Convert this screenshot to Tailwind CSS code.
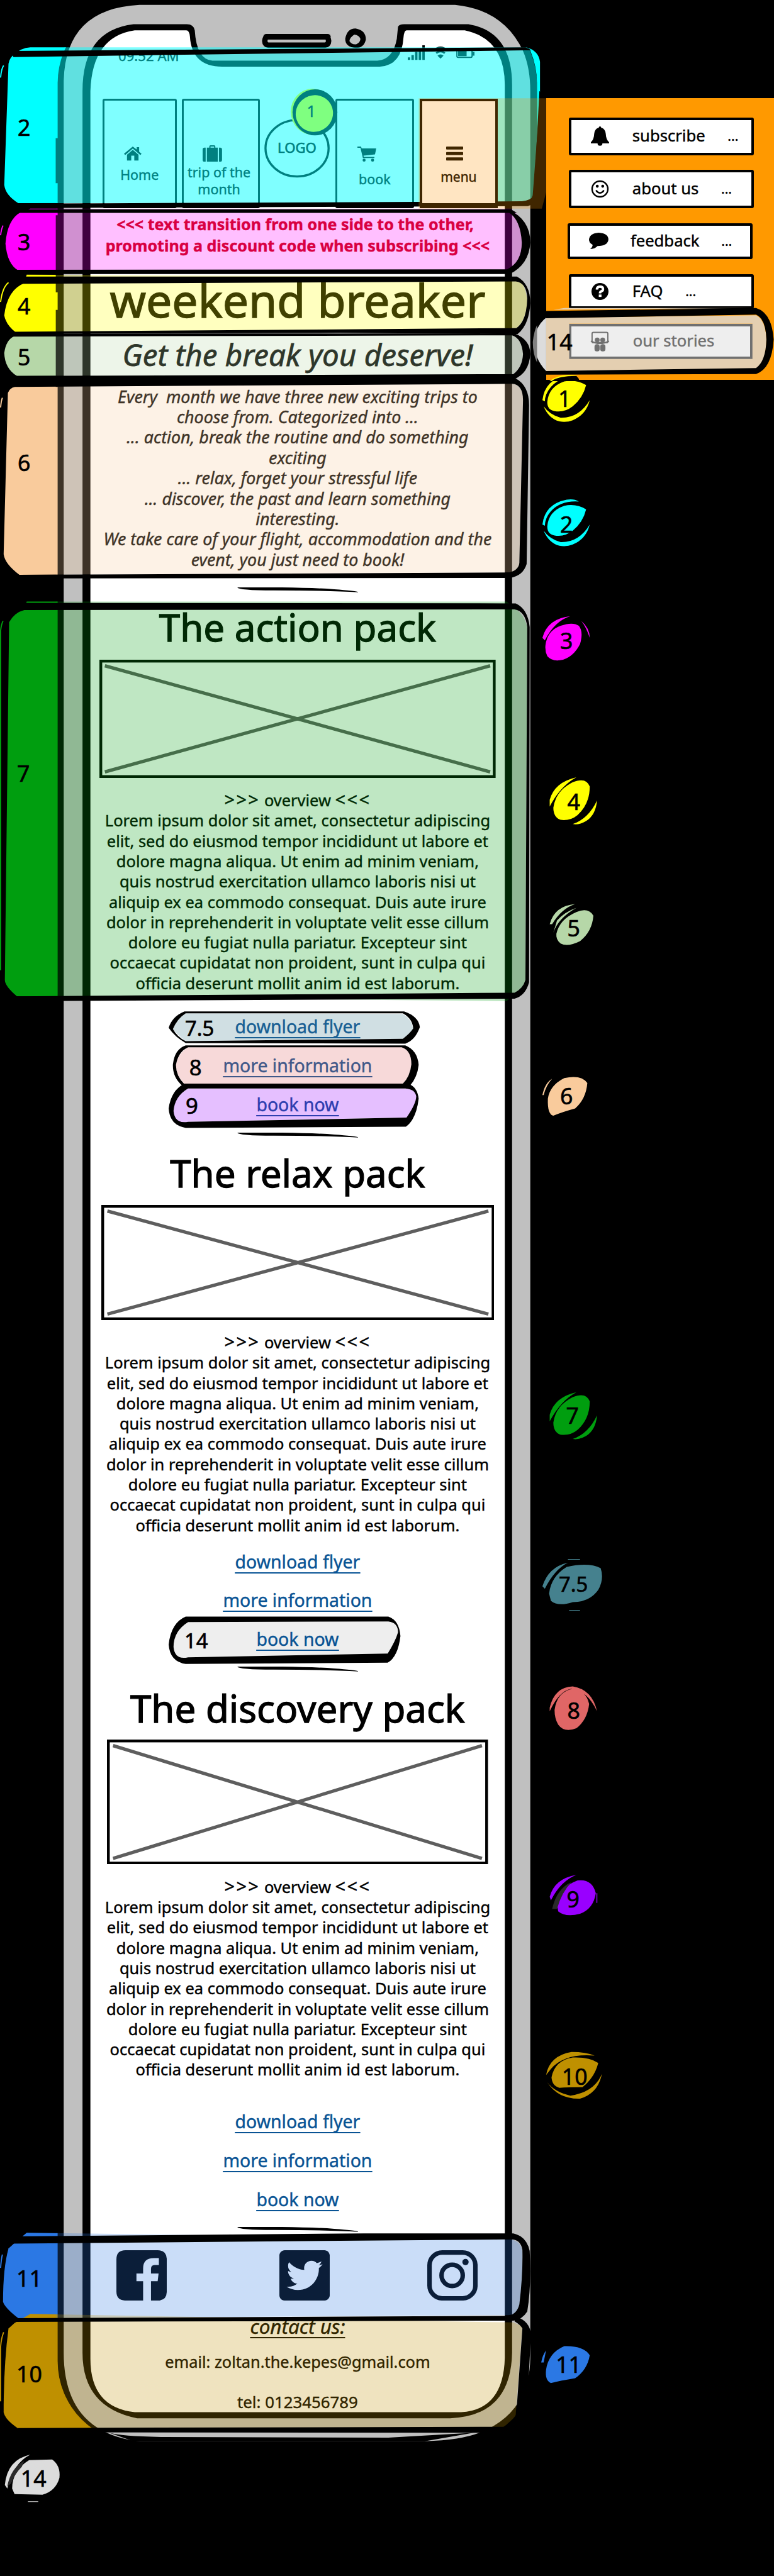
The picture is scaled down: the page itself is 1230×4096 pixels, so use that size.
<!DOCTYPE html>
<html lang="en">
<head>
<meta charset="utf-8">
<title>weekend breaker – annotated wireframe</title>
<script src="https://cdn.jsdelivr.net/npm/@tailwindcss/browser@4"></script>
</head>
<body class="bg-black overflow-hidden">
<div class="relative w-[1276px] h-[4248px] overflow-hidden bg-black text-black [zoom:0.9642] font-['Noto_Sans',sans-serif] [-webkit-text-stroke:0.45px]">

  <!-- Annotation colours behind the phone, then the phone body -->
  <svg class="absolute inset-0" width="1276" height="4248" viewBox="0 0 1276 4248">
    <defs>
      <path id="b2" d="M50 78H868Q888 84 890 102V162L878 322Q874 334 866 334L30 335Q9 322 7 305L14 105Q16 94 24 90Q34 79 50 78Z"/>
      <path id="b3" d="M50 344H842Q870 366 873 400Q868 434 845 446L30 446Q12 436 9 402Q12 362 34 350Z"/>
      <path id="b4" d="M44 453L850 457Q868 468 869 500Q866 530 850 542L26 548Q10 536 7 520Q12 478 40 467Z"/>
      <path id="b5" d="M24 554L846 552Q861 562 862 584Q860 606 844 618L28 620Q8 608 7 582Q10 560 24 554Z"/>
      <path id="b6" d="M24 638L40 625L846 632Q861 640 862 654L856 930Q852 943 840 944L32 948Q8 930 6 914L13 648Q16 640 24 638Z"/>
      <path id="b7" d="M40 1006L44 992H835L850 1004Q866 1016 869 1036L866 1620Q860 1634 850 1637L835 1651L28 1643Q8 1626 8 1616L15 1026Q24 1010 40 1006Z"/>
      <path id="b11" d="M24 3699L44 3682L842 3693Q860 3696 861 3716Q862 3770 855 3808Q850 3817 838 3818L30 3823Q8 3806 5 3796Q5 3740 14 3708Z"/>
      <path id="b10" d="M24 3831L50 3816L846 3830L861 3836L850 3982Q846 3998 830 4003L30 4005Q8 3990 6 3978Q6 3900 14 3840Z"/>
      <path id="leaf" d="M8 45Q10 20 36 11Q56 7 72 17Q67 38 50 52Q36 63 20 60Q8 58 8 45ZM0 42Q4 8 40 1Q52 -1 60 4Q30 2 14 20Q4 32 4 44ZM2 52Q12 66 30 71Q60 72 78 42Q72 66 50 75Q40 79 28 77Q10 72 2 52Z"/>
      <path id="drop" d="M6 50Q10 22 38 8Q60 -1 66 15Q66 44 46 62Q34 72 18 70Q6 66 6 50ZM0 37Q8 8 44 0Q18 14 0 48ZM38 77Q64 68 78 38Q76 62 60 72Q48 79 38 77Z"/>
      <path id="oval" d="M5 48Q8 24 30 16Q50 9 60 16Q68 26 62 46Q52 66 34 72Q16 76 8 66Q4 58 5 48ZM0 36Q8 4 46 0Q20 8 4 40ZM64 8Q78 20 78 36Q72 18 64 8Z"/>
      <clipPath id="phone"><rect x="92" y="1" width="793" height="4029" rx="138"/></clipPath>
      <clipPath id="leftHalf"><rect width="480" height="4248"/></clipPath>
    </defs>
    <use href="#b2" fill="#00ffff"/><use href="#b3" fill="#ff00ff"/><use href="#b4" fill="#ffff00"/>
    <use href="#b5" fill="#b6d7a8"/><use href="#b6" fill="#f9cb9c"/><use href="#b7" fill="#009e0f"/>
    <use href="#b11" fill="#2b78e4"/><use href="#b10" fill="#bf9000" clip-path="url(#leftHalf)"/>
    <g fill="none" stroke-width="2">
      <path d="M1 128Q2 114 6 108" stroke="#00ffff"/><path d="M1 388Q2 378 5 372" stroke="#ff00ff"/>
      <path d="M1 498Q4 474 14 466" stroke="#ffff00"/><path d="M1 672Q2 660 4 656" stroke="#f9cb9c"/>
      <path d="M1 1600V1040Q2 1030 5 1024" stroke="#009e0f"/><path d="M1 3740Q2 3725 4 3718" stroke="#2b78e4"/>
      <path d="M1 3960V3870Q2 3856 6 3846" stroke="#bf9000"/>
    </g>

    <!-- phone body -->
    <path d="M92 228H97V302H92ZM92 355H97V482H92ZM92 511H97V638H92Z"/>
    <rect x="95" y="1" width="790" height="4029" rx="136"/>
    <path d="M230 8H750Q830 16 862 84Q874 112 874 150V3890Q872 3980 790 4012Q760 4024 700 4026H230Q105 4012 105 3880V133Q108 14 230 8Z" fill="#c0c0c0"/>
    <path d="M180 4012Q200 4018 270 4019L640 4020L780 4012L820 4005L700 4026L220 4026Z"/>
    <path d="M220 40H308Q319 40 321 50Q324 98 350 100H622Q648 98 654 64L656 44Q658 40 666 40H772Q844 52 844 140V3880Q842 3984 742 3988H226Q136 3970 136 3880V150Q136 50 220 40Z"/>
    <path d="M222 50H307Q312 50 313 60Q316 110 366 110H626Q662 108 665 62Q666 50 670 50H766Q832 64 832 140V3888Q830 3974 760 3978H222Q149 3970 149 3890V150Q152 60 222 50Z" fill="#fff"/>
    <rect x="436.500" y="60.500" width="105" height="14" rx="6" fill="#c0c0c0" stroke="#000" stroke-width="9"/>
    <rect x="434" y="56" width="111" height="9" rx="5"/>
    <path d="M586 47Q603 50 603 65Q600 79 587 79Q569 78 569 64Q572 47 586 47ZM584 57Q576 62 576 68Q580 74 587 73Q594 70 594 64Q592 58 584 57Z" fill-rule="evenodd"/>
  </svg>

  <!-- Phone screen -->
  <main class="absolute left-[149px] top-[77px] w-[683px] flex flex-col items-center text-center whitespace-nowrap">
    <div class="w-full h-[30px] pl-[46px] pr-[50px] flex items-start justify-between text-[23px] leading-[30px]">
      <span>09:52 AM</span>
      <svg class="-mt-[2px]" width="110" height="26" viewBox="0 0 110 26"><path d="M0 20h4v4H0zM6 16h4v8H6zM12 11h4v13h-4zM18 6h4v18h-4zM24 0h4v24h-4z"/><g fill="none" stroke="#000" stroke-width="3"><path d="M43 8Q54-1 65 8M47 13Q54 7 61 13"/></g><path d="M49 17Q54 13 59 17L54 22Z"/><rect x="81" y="8" width="25" height="12" rx="2" fill="none" stroke="#000" stroke-width="2"/><path d="M83 9h14v9H83zM107 11h3v6h-3z"/></svg>
    </div>

    <nav class="mt-[56px] w-full h-[180px] pl-[20px] flex text-[22.3px] leading-[28px]">
      <div class="w-[122px] border-[3.5px] border-black rounded-[3px] flex flex-col items-center">
        <svg class="mt-[76px] mr-[22px]" width="29" height="23" viewBox="0 0 29 23"><path d="M14.500 0L0 12l2 2L14.500 3.500 27 14l2-2-4-3.500V1h-4v4zM5 13.500L14.500 5.500 24 13.500V23H17V15h-5v8H5z"/></svg>
        <span class="mt-[9px]">Home</span>
      </div>
      <div class="ml-[9px] w-[128px] border-[3.5px] border-black rounded-[3px] flex flex-col items-center">
        <svg class="mt-[74px] mr-[28px]" width="32" height="27" viewBox="0 0 32 27"><path d="M11 4V2Q11 0 13 0h6Q21 0 21 2v2h4v23H7V4zM13 4h6V2h-6zM5 4v23H3Q0 27 0 24V7Q0 4 3 4zM27 4v23h2Q32 27 32 24V7Q32 4 29 4z" fill-rule="evenodd"/></svg>
        <span class="mt-[3px] mr-[6px]">trip of the<br>month</span>
      </div>
      <div class="w-[125px] relative">
        <svg class="absolute left-[8px] top-[33px]" width="108" height="98" viewBox="0 0 108 98"><ellipse cx="54" cy="48.500" rx="52" ry="46.500" fill="none" stroke="#000" stroke-width="3.500"/></svg>
        <span class="block pt-[63px] pr-[2px] text-[23px] leading-[34px] [-webkit-text-stroke:0.7px]">LOGO</span>
        <svg class="absolute left-[50px] top-[-18px]" width="80" height="82" viewBox="0 0 80 82"><ellipse cx="37" cy="39" rx="36" ry="38" fill="#ff0"/><ellipse cx="41" cy="40" rx="37" ry="38"/><ellipse cx="40" cy="42" rx="31" ry="30" fill="#ff0" transform="rotate(-30 40 42)"/></svg>
        <span class="absolute left-[76px] top-[2px] w-[18px] text-[26px] leading-[36px]">1</span>
      </div>
      <div class="w-[129px] border-[3.5px] border-black rounded-[3px] flex flex-col items-center">
        <svg class="mt-[76px] mr-[26px]" width="31" height="25" viewBox="0 0 31 25"><path d="M0 0h6l1 3h24l-2 10-19 2 .5 2H28v2H9L5 2H0z"/><circle cx="11" cy="22.500" r="2.500"/><circle cx="25" cy="22.500" r="2.500"/></svg>
        <span class="mt-[14px]">book</span>
      </div>
      <div class="relative z-20 ml-[10px] w-[128px] border-[4.5px] border-b-[9px] border-[#402600] bg-[#ffe5c2] text-[#402600] flex flex-col items-center">
        <svg class="mt-[75px] mr-[14px]" width="28" height="23" viewBox="0 0 28 23" fill="currentColor"><rect width="28" height="5" rx="1"/><rect y="9" width="28" height="5" rx="1"/><rect y="18" width="28" height="5" rx="1"/></svg>
        <span class="mt-[13px] text-[21.8px]">menu</span>
      </div>
    </nav>

    <p class="mt-[9.5px] text-[26px] leading-[35px] font-bold text-[#cc0000]"><span class="mr-[8px]">&lt;&lt;&lt; text transition from one side to the other,</span><br>promoting a discount code when subscribing &lt;&lt;&lt;</p>
    <h1 class="mt-[28px] text-[76px] leading-[90px] [-webkit-text-stroke:1.4px]">weekend breaker</h1>
    <h2 class="mt-[14px] text-[49.3px] leading-[60px] italic [-webkit-text-stroke:0.8px]">Get the break you deserve!</h2>
    <p class="mt-[23px] text-[27.8px] leading-[33.6px] italic">Every&nbsp; month we have three new exciting trips to<br>choose from. Categorized into ...<br>... action, break the routine and do something<br>exciting<br>... relax, forget your stressful life<br>... discover, the past and learn something<br>interesting.<br>We take care of your flight, accommodation and the<br>event, you just need to book!</p>

    <svg class="mt-[29px]" width="200" height="8" viewBox="0 0 200 8"><path d="M0 0Q100-1 160 3Q200 6 200 8Q150 5 60 5Q2 5 0 0Z"/></svg>

    <section class="mt-[18px] flex flex-col items-center">
      <h3 class="text-[62.300px] leading-[80px] [-webkit-text-stroke:1.3px]">The action pack</h3>
      <svg class="mt-[13px]" width="653" height="195" viewBox="0 0 653 195" fill="none"><rect x="2.300" y="2.300" width="648.400" height="190.400" stroke="#000" stroke-width="4.600"/><path d="M9 10L644 185M9 185L644 10" stroke="#5e5e5e" stroke-width="5.500"/></svg>
      <p class="mt-[20px] text-[26.400px] leading-[33.5px]"><span class="text-[30px] leading-[20px] tracking-[2.5px]">&gt;&gt;&gt;</span> overview <span class="text-[30px] leading-[20px] tracking-[2.5px]">&lt;&lt;&lt;</span><br>Lorem ipsum dolor sit amet, consectetur adipiscing<br>elit, sed do eiusmod tempor incididunt ut labore et<br>dolore magna aliqua. Ut enim ad minim veniam,<br>quis nostrud exercitation ullamco laboris nisi ut<br>aliquip ex ea commodo consequat. Duis aute irure<br>dolor in reprehenderit in voluptate velit esse cillum<br>dolore eu fugiat nulla pariatur. Excepteur sint<br>occaecat cupidatat non proident, sunt in culpa qui<br>officia deserunt mollit anim id est laborum.</p>
      <div class="mt-[24px] flex flex-col text-[29.500px] leading-[64px] text-[#085394] underline underline-offset-[6px] decoration-[2.5px] [text-decoration-skip-ink:none]"><a>download flyer</a><a>more information</a><a>book now</a></div>
    </section>

    <svg class="mt-[14px]" width="200" height="8" viewBox="0 0 200 8"><path d="M0 0Q100-1 160 3Q200 6 200 8Q150 5 60 5Q2 5 0 0Z"/></svg>

    <section class="mt-[19px] flex flex-col items-center">
      <h3 class="text-[62.300px] leading-[80px] [-webkit-text-stroke:1.3px]">The relax pack</h3>
      <svg class="mt-[12px]" width="648" height="190" viewBox="0 0 648 190" fill="none"><rect x="2.300" y="2.300" width="643.400" height="185.400" stroke="#000" stroke-width="4.600"/><path d="M10 10L638 180M10 180L638 10" stroke="#5e5e5e" stroke-width="5.500"/></svg>
      <p class="mt-[20px] text-[26.400px] leading-[33.5px]"><span class="text-[30px] leading-[20px] tracking-[2.5px]">&gt;&gt;&gt;</span> overview <span class="text-[30px] leading-[20px] tracking-[2.5px]">&lt;&lt;&lt;</span><br>Lorem ipsum dolor sit amet, consectetur adipiscing<br>elit, sed do eiusmod tempor incididunt ut labore et<br>dolore magna aliqua. Ut enim ad minim veniam,<br>quis nostrud exercitation ullamco laboris nisi ut<br>aliquip ex ea commodo consequat. Duis aute irure<br>dolor in reprehenderit in voluptate velit esse cillum<br>dolore eu fugiat nulla pariatur. Excepteur sint<br>occaecat cupidatat non proident, sunt in culpa qui<br>officia deserunt mollit anim id est laborum.</p>
      <div class="mt-[12px] flex flex-col text-[29.500px] leading-[64px] text-[#085394] underline underline-offset-[6px] decoration-[2.5px] [text-decoration-skip-ink:none]"><a>download flyer</a><a>more information</a><a class="relative z-20 underline">book now</a></div>
    </section>

    <svg class="mt-[13px]" width="200" height="8" viewBox="0 0 200 8"><path d="M0 0Q100-1 160 3Q200 6 200 8Q150 5 60 5Q2 5 0 0Z"/></svg>

    <section class="mt-[21px] flex flex-col items-center">
      <h3 class="text-[62.300px] leading-[80px] [-webkit-text-stroke:1.3px]">The discovery pack</h3>
      <svg class="mt-[11px]" width="628" height="206" viewBox="0 0 628 206" fill="none"><rect x="2.300" y="2.300" width="623.400" height="201.400" stroke="#000" stroke-width="4.600"/><path d="M10 10L618 196M10 196L618 10" stroke="#5e5e5e" stroke-width="5.500"/></svg>
      <p class="mt-[20px] text-[26.400px] leading-[33.5px]"><span class="text-[30px] leading-[20px] tracking-[2.5px]">&gt;&gt;&gt;</span> overview <span class="text-[30px] leading-[20px] tracking-[2.5px]">&lt;&lt;&lt;</span><br>Lorem ipsum dolor sit amet, consectetur adipiscing<br>elit, sed do eiusmod tempor incididunt ut labore et<br>dolore magna aliqua. Ut enim ad minim veniam,<br>quis nostrud exercitation ullamco laboris nisi ut<br>aliquip ex ea commodo consequat. Duis aute irure<br>dolor in reprehenderit in voluptate velit esse cillum<br>dolore eu fugiat nulla pariatur. Excepteur sint<br>occaecat cupidatat non proident, sunt in culpa qui<br>officia deserunt mollit anim id est laborum.</p>
      <div class="mt-[38px] flex flex-col text-[29.500px] leading-[64px] text-[#085394] underline underline-offset-[6px] decoration-[2.5px] [text-decoration-skip-ink:none]"><a>download flyer</a><a>more information</a><a>book now</a></div>
    </section>

    <svg class="mt-[13px]" width="200" height="8" viewBox="0 0 200 8"><path d="M0 0Q100-1 160 3Q200 6 200 8Q150 5 60 5Q2 5 0 0Z"/></svg>

    <footer class="mt-[30px] w-full flex flex-col items-center">
      <div class="w-full pl-[43px] pr-[45px] flex items-center">
        <svg width="83" height="83" viewBox="0 0 83 83"><path fill-rule="evenodd" d="M15 0H68Q83 0 83 15V68Q83 83 68 83H57V51H68L69.500 38.500H57V31Q57 24.500 63 24.500H70V13H62Q44 13 44 30V38.500H33V51H44V83H15Q0 83 0 68V15Q0 0 15 0Z"/></svg>
        <svg class="ml-[185px]" width="83" height="83" viewBox="0 32 448 448"><path d="M400 32H48C21.500 32 0 53.500 0 80v352c0 26.500 21.500 48 48 48h352c26.500 0 48-21.500 48-48V80c0-26.500-21.500-48-48-48zm-48.900 158.800c.2 2.800.2 5.700.2 8.500 0 86.700-66 186.600-186.600 186.600-37.200 0-71.700-10.800-100.700-29.400 5.300.6 10.400.8 15.800.8 30.700 0 58.900-10.400 81.400-28-28.800-.6-53-19.500-61.300-45.500 10.100 1.500 19.200 1.500 29.600-1.200-30-6.100-52.500-32.500-52.500-64.400v-.8c8.700 4.900 18.900 7.900 29.600 8.300a65.447 65.447 0 0 1-29.200-54.600c0-12.200 3.200-23.400 8.900-33.100 32.300 39.800 80.800 65.800 135.200 68.600-9.300-44.500 24-80.600 64-80.600 18.900 0 35.900 7.900 47.900 20.700 14.800-2.800 29-8.300 41.600-15.800-4.900 15.200-15.200 28-28.800 36.100 13.200-1.400 26-5.100 37.800-10.200-8.900 13.100-20.100 24.700-32.900 34z"/></svg>
        <svg class="ml-[161px]" width="83" height="83" viewBox="0 0 83 83"><rect x="3.700" y="3.700" width="75.600" height="75.600" rx="21" fill="none" stroke="#000" stroke-width="7.400"/><circle cx="41" cy="41.500" r="17.500" fill="none" stroke="#000" stroke-width="7.400"/><circle cx="63" cy="19.500" r="5.200"/></svg>
      </div>
      <p class="mt-[23px] text-[32.600px] leading-[40px] italic underline underline-offset-[5px] decoration-[2.5px]">contact us:</p>
      <p class="mt-[20px] text-[26.300px] leading-[36px]">email: zoltan.the.kepes@gmail.com</p>
      <p class="mt-[31px] text-[26.800px] leading-[36px]">tel: 0123456789</p>
    </footer>
  </main>

  <!-- Translucent annotation tints and hand-drawn outlines over the phone -->
  <svg class="absolute inset-0 z-10" width="1276" height="4248" viewBox="0 0 1276 4248">
    <g clip-path="url(#phone)">
      <use href="#b2" fill="#00ffff" fill-opacity=".5"/><use href="#b3" fill="#ff00ff" fill-opacity=".25"/>
      <use href="#b4" fill="#ffff00" fill-opacity=".25"/><use href="#b5" fill="#b6d7a8" fill-opacity=".25"/>
      <use href="#b6" fill="#f9cb9c" fill-opacity=".25"/><use href="#b7" fill="#009e0f" fill-opacity=".25"/>
      <use href="#b11" fill="#2b78e4" fill-opacity=".25"/><use href="#b10" fill="#bf9000" fill-opacity=".25"/>
    </g>
    <!-- outlines 2 to 5 -->
    <path d="M20 84L866 78L876 83L866 83L22 94ZM26 336L860 332Q876 330 880 322L889 150L902 162L893 322Q884 336 870 340L600 341L50 343Z"/>
    <path d="M20 345H842L852 351H24ZM24 445L845 444L835 452L40 452ZM838 346Q874 362 874 400Q872 436 840 452L836 444Q860 432 860 400Q858 362 838 350Z"/>
    <path d="M30 456L852 456Q874 468 874 500Q872 536 853 551L560 549L24 550V547L851 541Q868 530 869 492Q868 466 850 464L36 468Z"/>
    <path d="M20 550H848Q874 560 874 584Q872 616 846 626L20 628V620L846 617Q861 606 862 584Q860 558 844 553L20 555Z"/>
    <path d="M20 627L850 624Q872 636 872 668L868 930Q862 950 840 953L30 954V948L840 944Q855 940 856 928L862 660Q862 634 844 633L22 638Z"/>
    <path d="M24 994L850 995Q870 1004 873 1034L872 1620Q866 1642 848 1647L24 1651V1643L848 1637Q862 1630 866 1616L869 1034Q866 1008 848 1005L24 1006Z"/>
    <path d="M20 3688L600 3683H846Q868 3688 873 3712Q876 3770 869 3812Q860 3826 846 3827L20 3829V3823L838 3819Q852 3816 856 3800Q862 3750 861 3710Q858 3693 842 3693L20 3700Z"/>
    <path d="M850 3820Q874 3828 875 3850L868 3990Q866 4008 850 4012L30 4011V4004L832 4002Q850 4000 851 3980L861 3840Q858 3834 848 3828Z"/>
    <!-- menu highlight where it crosses the phone -->
    <path d="M690 162H902V310L893 344H690Z" fill="#ff9900" fill-opacity=".25"/>

    <!-- pills 7.5, 8, 9 and 14 -->
    <path d="M306 1671L664 1672Q678 1680 681 1696Q676 1706 664 1713L306 1717Q292 1706 285 1697Q292 1680 306 1671Z" fill="#45818e" fill-opacity=".25"/>
    <path d="M310 1727L664 1726Q678 1734 678 1755Q676 1775 664 1787L304 1788Q290 1772 290 1756Q294 1736 310 1727Z" fill="#e06666" fill-opacity=".25"/>
    <path d="M310 1795H664Q684 1794 687 1808Q686 1826 670 1843L310 1850Q286 1856 285 1830Q288 1808 310 1795Z" fill="#9900ff" fill-opacity=".25"/>
    <path d="M310 2675L640 2674Q654 2676 656 2690Q654 2710 640 2727L310 2733Q286 2740 285 2712Q288 2690 310 2675Z" fill="#ddd" fill-opacity=".5"/>
    <path fill-rule="evenodd" d="M304 1668H666Q690 1676 692 1694Q684 1716 668 1721L306 1720Q288 1710 278 1695Q284 1676 304 1668ZM306 1671Q292 1680 285 1697Q292 1710 306 1717L664 1713Q676 1704 681 1696Q680 1680 664 1671Z"/>
    <path fill-rule="evenodd" d="M304 1724H668Q688 1732 690 1756Q688 1776 676 1790L300 1790Q284 1776 285 1755Q288 1730 306 1724ZM310 1727Q294 1734 290 1756Q290 1774 304 1788L664 1787Q676 1775 678 1755Q678 1732 662 1727Z"/>
    <path fill-rule="evenodd" d="M304 1787H672Q688 1792 690 1812Q686 1846 669 1858L306 1860Q280 1856 278 1828Q282 1798 304 1787ZM310 1795Q288 1808 286 1832Q288 1854 310 1850L670 1843Q686 1820 686 1808Q684 1796 668 1795Z"/>
    <path fill-rule="evenodd" d="M306 2666H640Q658 2672 660 2698Q656 2732 639 2742L306 2744Q280 2740 278 2712Q282 2676 306 2666ZM310 2675Q286 2690 286 2716Q288 2738 310 2733L639 2727Q652 2706 656 2692Q656 2676 640 2674Z"/>

    <!-- legend pins -->
    <use href="#leaf" x="894" y="618" fill="#ffff00"/><use href="#leaf" x="894" y="823" fill="#00ffff"/>
    <use href="#oval" x="894" y="1016" fill="#ff00ff"/><use href="#drop" x="906" y="1282" fill="#ffff00"/>
    <path d="M917 1540Q922 1516 950 1504Q970 1496 978 1510Q976 1536 956 1552Q936 1562 924 1556Q916 1550 917 1540ZM906 1524Q914 1494 948 1491Q926 1498 910 1524ZM912 1538Q920 1514 950 1497Q930 1504 918 1518Z" fill="#b6d7a8"/>
    <path d="M903 1812Q906 1790 930 1778Q958 1772 968 1786Q966 1812 948 1828Q926 1834 912 1840Q902 1838 903 1812ZM894 1806Q898 1786 910 1779Q900 1790 896 1806Z" fill="#f9cb9c"/>
    <use href="#drop" x="906" y="2296" fill="#009e0f"/>
    <path d="M905 2628Q908 2600 934 2584Q970 2576 990 2586Q996 2604 986 2622Q972 2642 944 2642Q920 2650 908 2640ZM894 2616Q904 2584 936 2577Q914 2588 898 2620ZM936 2571H956V2572H936ZM938 2655H956V2656H938Z" fill="#45818e"/>
    <path d="M914 2820Q918 2790 944 2785Q966 2788 971 2810Q968 2836 950 2850Q930 2858 920 2844Q914 2834 914 2820ZM906 2816Q914 2782 944 2781Q976 2786 984 2822Q968 2788 942 2785Q922 2788 906 2822Z" fill="#e06666"/>
    <path d="M918 3140Q922 3112 952 3101Q976 3098 982 3122Q978 3148 956 3156Q932 3162 920 3152ZM906 3128Q914 3098 950 3092Q924 3102 908 3134ZM983 3122h1.500v16h-1.500z" fill="#9900ff"/>
    <path d="M910 3148Q918 3114 942 3104Q926 3120 918 3148Z" fill="#2a2a2a"/>
    <path d="M909 3426Q914 3398 944 3393Q972 3392 986 3402Q980 3426 960 3442Q936 3442 922 3443Q910 3440 909 3426ZM900 3422Q906 3390 942 3384Q966 3384 980 3390Q930 3386 908 3412ZM902 3434Q914 3450 940 3456Q980 3450 992 3420Q986 3452 956 3461Q920 3462 902 3434Z" fill="#bf9000"/>
    <path d="M900 3908Q904 3880 930 3869Q962 3868 972 3884Q968 3908 948 3922Q924 3926 908 3930Q898 3926 900 3908ZM892 3896Q894 3884 900 3876L896 3896Z" fill="#2b78e4"/>
    <path d="M20 4104Q20 4074 48 4057L86 4056Q100 4066 98 4086Q92 4108 70 4114L24 4113ZM8 4098Q12 4056 50 4048Q22 4062 12 4104ZM46 4125h17v1h-17z" fill="#dcdcdc"/>
    <path d="M12 4100Q18 4070 40 4058L36 4068Q24 4080 18 4096Z" fill="#2a2a2a"/>
  </svg>

  <!-- Slide-out menu -->
  <aside class="absolute z-10 left-[900px] top-[162px] w-[376px] h-[464px] bg-[#ff9900] pl-[38px] pt-[32px] flex flex-col text-[26.600px] leading-[30px] whitespace-nowrap">
    <div class="w-[304px] h-[62px] bg-white border-[5px] border-black rounded-[3px] flex items-center pl-[32px]">
      <svg width="30" height="32" viewBox="0 0 30 32"><path d="M15 0Q17 0 17 2Q24 4 24.500 12Q25 22 30 26V28H19Q19 32 15 32Q11 32 11 28H0V26Q5 22 5.500 12Q6 4 13 2Q13 0 15 0Z"/></svg>
      <span class="ml-[38px]">subscribe</span><span class="ml-[37px] text-[22px]">...</span>
    </div>
    <div class="mt-[24px] w-[304px] h-[63px] bg-white border-[5px] border-black rounded-[3px] flex items-center pl-[32px]">
      <svg width="30" height="30" viewBox="0 0 30 30"><circle cx="15" cy="15" r="13" fill="none" stroke="#000" stroke-width="2.500"/><circle cx="10.500" cy="10.500" r="2.400"/><circle cx="19.500" cy="10.500" r="2.400"/><path d="M9 18Q15 25 21 18" fill="none" stroke="#000" stroke-width="2.500" stroke-linecap="round"/></svg>
      <span class="ml-[38px]">about us</span><span class="ml-[37px] text-[22px]">...</span>
    </div>
    <div class="mt-[25px] -ml-[2px] w-[304px] h-[59px] bg-white border-[5px] border-black rounded-[3px] flex items-center pl-[31px]">
      <svg width="32" height="27" viewBox="0 0 32 27"><path d="M16 0Q32 1 32 11.500Q31 22 14 22Q9 27 2 27Q6 24 6 20Q0 17 0 11.500Q1 1 16 0Z"/></svg>
      <span class="ml-[36px]">feedback</span><span class="ml-[36px] text-[22px]">...</span>
    </div>
    <div class="mt-[25px] w-[304px] h-[57px] bg-white border-[5px] border-black rounded-[3px] flex items-center pl-[32px]">
      <svg width="30" height="28" viewBox="0 0 30 28"><circle cx="15" cy="14" r="14"/><path d="M10 11Q10 6 15 6Q20 6 20 10Q20 12.500 17.500 13.500Q15 14.500 15 17" fill="none" stroke="#fff" stroke-width="4"/><rect x="13" y="19" width="4.500" height="4" fill="#fff"/></svg>
      <span class="ml-[38px]">FAQ</span><span class="ml-[37px] text-[22px]">...</span>
    </div>
    <div class="relative z-20 mt-[25px] w-[302px] h-[58px] bg-[#eee] border-[5px] border-[#707070] text-[#707070] flex items-center pl-[31px]">
      <svg width="32" height="33" viewBox="0 0 32 33" fill="currentColor"><rect x="3" y="1.500" width="26" height="17" rx="2" fill="none" stroke="currentColor" stroke-width="2"/><path d="M1 16Q16 24 31 16" fill="none" stroke="currentColor" stroke-width="2"/><circle cx="11.500" cy="14" r="4"/><circle cx="20.500" cy="14" r="4"/><rect x="7" y="21" width="8.500" height="12" rx="4"/><rect x="16.500" y="21" width="8.500" height="12" rx="4"/></svg>
      <span class="ml-[38px]">our stories</span>
    </div>
  </aside>
  <svg class="absolute left-[870px] top-[500px] z-10" width="406" height="130" viewBox="870 500 406 130">
    <path fill-rule="evenodd" fill="#e4cfb1" d="M900 524L1246 520Q1262 528 1263 560Q1262 600 1246 608L900 613ZM938 534V592H1240V534Z"/>
    <path d="M900 524Q884 536 880 560Q879 590 900 612Z" fill="#dcdcdc"/>
    <path d="M885 536V598Q878 584 878 564Q880 546 885 536Z" fill="#808080"/>
    <path d="M912 511L930 508H1240V508Z" fill="#e4cfb1"/>
    <path d="M900 513L1246 508Q1272 516 1275 560Q1272 608 1246 617L900 618V612L1246 607Q1262 596 1263 560Q1262 526 1246 519L900 525Z"/>
  </svg>
  <svg class="absolute left-[894px] top-[616px] z-10" width="60" height="12" viewBox="894 616 60 12"><path d="M905 629Q914 620 936 618H950V619Q920 620 910 629Z" fill="#ffff00"/><path d="M908 629Q920 620 950 620L958 629Z"/></svg>

  <!-- Numbers -->
  <div class="absolute inset-0 z-20 text-[37px] leading-[40px] whitespace-nowrap [-webkit-text-stroke:0.7px]">
    <span class="absolute left-[29px] top-[190px]">2</span>
    <span class="absolute left-[29px] top-[379px]">3</span>
    <span class="absolute left-[29px] top-[484px]">4</span>
    <span class="absolute left-[29px] top-[568px]">5</span>
    <span class="absolute left-[29px] top-[743px]">6</span>
    <span class="absolute left-[28px] top-[1255px]">7</span>
    <span class="absolute left-[27px] top-[3737px]">11</span>
    <span class="absolute left-[27px] top-[3894px]">10</span>
    <span class="absolute left-[34px] top-[4067px]">14</span>
    <span class="absolute left-[901px] top-[543px]">14</span>
    <span class="absolute left-[920px] top-[637px]">1</span>
    <span class="absolute left-[923px] top-[844px]">2</span>
    <span class="absolute left-[923px] top-[1036px]">3</span>
    <span class="absolute left-[935px] top-[1302px]">4</span>
    <span class="absolute left-[935px] top-[1510px]">5</span>
    <span class="absolute left-[923px] top-[1787px]">6</span>
    <span class="absolute left-[933px] top-[2314px]">7</span>
    <span class="absolute left-[921px] top-[2593px] text-[34px]">7.5</span>
    <span class="absolute left-[935px] top-[2800px]">8</span>
    <span class="absolute left-[934px] top-[3111px]">9</span>
    <span class="absolute left-[926px] top-[3404px]">10</span>
    <span class="absolute left-[916px] top-[3879px]">11</span>
    <span class="absolute left-[305px] top-[1676px] text-[34px]">7.5</span>
    <span class="absolute left-[312px] top-[1740px] text-[36px]">8</span>
    <span class="absolute left-[306px] top-[1804px] text-[36px]">9</span>
    <span class="absolute left-[304px] top-[2686px] text-[34px]">14</span>
  </div>
</div>
</body>
</html>
